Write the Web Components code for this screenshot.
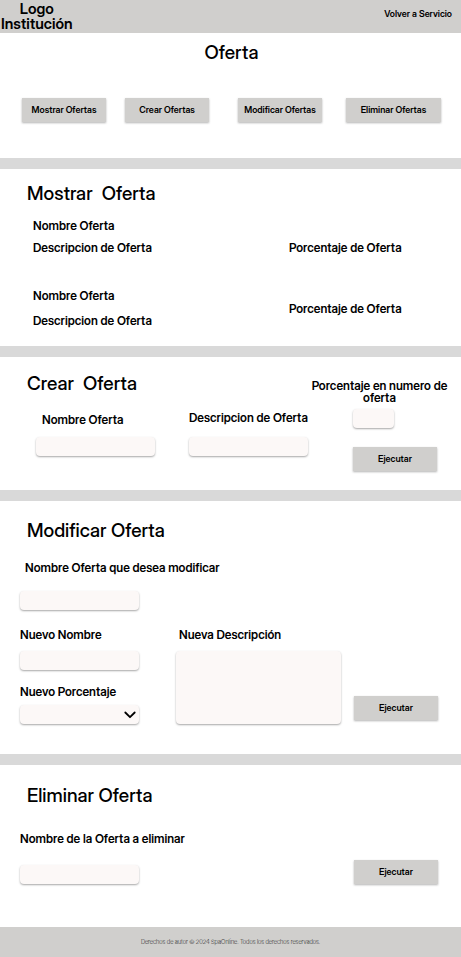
<!DOCTYPE html>
<html lang="es">
<head>
<meta charset="utf-8">
<meta name="viewport" content="width=device-width, initial-scale=1">
<title>Oferta</title>
<style>
body { margin: 0; background: #fff; color: #000; font: 600 12px/16px "Inter Display", Inter, "Liberation Sans", sans-serif; }
</style>
</head>
<body>
<offer-page></offer-page>
<script>
const define = (name, html, setup) => {
  const template = document.createElement("template");
  template.innerHTML = html;
  customElements.define(name, class extends HTMLElement {
    constructor() {
      super();
      this.attachShadow({ mode: "open" }).append(template.content.cloneNode(true));
    }
    connectedCallback() {
      if (setup) setup(this, this.shadowRoot);
    }
  });
};

const controlStyle = `
  :host { display: flex; flex-direction: column; align-items: flex-start; gap: var(--field-gap, 8px); }
  label { padding-left: var(--label-inset, 0); }
  input, select, textarea {
    display: block; box-sizing: border-box; margin: 0; border: 0; padding: 0 6px;
    width: var(--control-width, 119px); max-width: 100%; height: 19px;
    border-radius: 4px; background: #fcf8f7; color: inherit; font: inherit;
    box-shadow: 0 1px 2px rgba(0, 0, 0, .35);
  }`;

const tieLabel = (host, root) => {
  root.querySelector("label").textContent = host.getAttribute("label");
};

define("text-field", `
  <style>${controlStyle}</style>
  <label for="control"></label>
  <input id="control" type="text">`, tieLabel);

define("percent-field", `
  <style>${controlStyle}
    label { align-self: stretch; text-align: center; line-height: 12px; }
    input { width: 41px; margin-left: 45px; }
  </style>
  <label for="control"></label>
  <input id="control" type="text" inputmode="numeric">`, tieLabel);

define("area-field", `
  <style>${controlStyle}
    textarea { width: 165px; height: 73px; padding: 4px 6px; resize: none; }
  </style>
  <label for="control"></label>
  <textarea id="control"></textarea>`, tieLabel);

define("select-field", `
  <style>${controlStyle}
    .box { display: grid; align-items: center; justify-items: end; }
    .box > * { grid-area: 1 / 1; }
    select { appearance: none; }
    svg { width: 12px; height: 8px; margin-right: 3px; pointer-events: none; z-index: 1; }
  </style>
  <label for="control"></label>
  <div class="box">
    <select id="control"><option></option></select>
    <svg viewBox="0 0 12 8" aria-hidden="true"><path d="M1.3 1.5 6 6.2 10.7 1.5" fill="none" stroke="#000" stroke-width="1.8" stroke-linecap="round" stroke-linejoin="round"/></svg>
  </div>`, tieLabel);

define("action-button", `
  <style>
    :host { display: block; width: 84px; }
    button {
      display: block; width: 100%; height: 24px; margin: 0; padding: 0; border: 0;
      background: #d0cfcd; color: inherit; font: inherit; font-size: 9px; line-height: 12px;
      white-space: nowrap; box-shadow: 0 1px 2px rgba(0, 0, 0, .3); cursor: pointer;
    }
  </style>
  <button type="button"><slot></slot></button>`);

define("site-header", `
  <style>
    :host { display: block; background: #d0cfcd; }
    header { display: flex; justify-content: space-between; align-items: flex-start; padding: 1px 9px 2px 1px; }
    .logo { font-size: 15px; line-height: 15px; text-align: center; }
    a { color: inherit; text-decoration: none; font-size: 9px; line-height: 12px; padding-top: 7px; }
  </style>
  <header>
    <div class="logo">Logo<br>Institución</div>
    <a href="#servicio">Volver a Servicio</a>
  </header>`);

define("offer-nav", `
  <style>
    :host { display: block; padding: 8px 20px 36px 22px; }
    h1 { margin: 0 0 33px; font-size: 19px; line-height: 24px; font-weight: 500; text-align: center; }
    nav { display: grid; grid-template-columns: 103fr 113fr 108fr 95fr; }
    action-button:last-child { width: auto; }
  </style>
  <h1>Oferta</h1>
  <nav>
    <action-button>Mostrar Ofertas</action-button>
    <action-button>Crear Ofertas</action-button>
    <action-button>Modificar Ofertas</action-button>
    <action-button>Eliminar Ofertas</action-button>
  </nav>`);

define("offer-section", `
  <style>
    :host { display: block; border-top: 11px solid #d9d9d9; }
    h2 { margin: 0; padding-left: 27px; font-size: 19px; line-height: 24px; font-weight: 500; white-space: pre; }
  </style>
  <section><h2></h2><slot></slot></section>`, (host, root) => {
  root.querySelector("h2").textContent = host.getAttribute("heading");
});

define("offer-item", `
  <style>
    :host { display: grid; grid-template-columns: 256fr 172fr; row-gap: var(--row-gap, 6px); align-items: end; }
    .name, .description { grid-column: 1; }
    .percent { grid-column: 2; grid-row: var(--percent-row, 2); align-self: center; }
  </style>
  <div class="name">Nombre Oferta</div>
  <div class="description">Descripcion de Oferta</div>
  <div class="percent">Porcentaje de Oferta</div>`);

define("site-footer", `
  <style>
    :host { display: block; background: #d0cfcd; }
    footer { padding: 9px 0; text-align: center; font-size: 6px; line-height: 12px; font-weight: 300; color: #333; }
  </style>
  <footer>Derechos de autor © 2024 SpaOnline. Todos los derechos reservados.</footer>`);

define("offer-page", `
  <style>
    :host { display: block; }
    .show { padding: 13px 0 17px; }
    .list { display: grid; gap: 32px; padding: 12px 0 0 33px; }
    .list offer-item:last-child { --row-gap: 9px; --percent-row: 1 / 3; }

    .create { padding: 15px 0 19px; }
    .create-form { display: grid; grid-template-columns: 153fr 119fr 143fr; padding: 0 10px 0 36px; align-items: end; }
    .create-form text-field { --field-gap: 9px; --label-inset: 6px; padding-bottom: 15px; white-space: nowrap; }
    .create-form text-field + text-field { --field-gap: 11px; --label-inset: 0; }
    .side { margin-top: -16px; }
    .side percent-field { --field-gap: 5px; }
    .side action-button { margin: 19px 0 0 45px; }

    .edit { padding: 18px 0 30px; }
    .edit-form { padding: 17px 22px 0 20px; }
    .edit-form > text-field { --field-gap: 15px; --label-inset: 5px; }
    .grid { display: grid; grid-template-columns: 156fr 178fr 85fr; margin-top: 17px; }
    .stack { display: grid; gap: 14px; }
    .stack select-field { --field-gap: 5px; }
    .grid area-field { --label-inset: 3px; }
    .grid action-button { align-self: end; margin-bottom: 4px; }

    .remove { padding: 19px 0 43px; }
    .remove-form { display: flex; justify-content: space-between; align-items: flex-end; padding: 23px 23px 0 20px; }
    .remove-form text-field { --field-gap: 18px; }
  </style>
  <site-header></site-header>
  <main>
    <offer-nav></offer-nav>
    <offer-section heading="Mostrar  Oferta" class="show">
      <div class="list"><offer-item></offer-item><offer-item></offer-item></div>
    </offer-section>
    <offer-section heading="Crear  Oferta" class="create">
      <form class="create-form">
        <text-field label="Nombre Oferta"></text-field>
        <text-field label="Descripcion de Oferta"></text-field>
        <div class="side">
          <percent-field label="Porcentaje en numero de oferta"></percent-field>
          <action-button>Ejecutar</action-button>
        </div>
      </form>
    </offer-section>
    <offer-section heading="Modificar Oferta" class="edit">
      <form class="edit-form">
        <text-field label="Nombre Oferta que desea modificar"></text-field>
        <div class="grid">
          <div class="stack">
            <text-field label="Nuevo Nombre"></text-field>
            <select-field label="Nuevo Porcentaje"></select-field>
          </div>
          <area-field label="Nueva Descripción"></area-field>
          <action-button>Ejecutar</action-button>
        </div>
      </form>
    </offer-section>
    <offer-section heading="Eliminar Oferta" class="remove">
      <form class="remove-form">
        <text-field label="Nombre de la Oferta a eliminar"></text-field>
        <action-button>Ejecutar</action-button>
      </form>
    </offer-section>
  </main>
  <site-footer></site-footer>`);
</script>
</body>
</html>
